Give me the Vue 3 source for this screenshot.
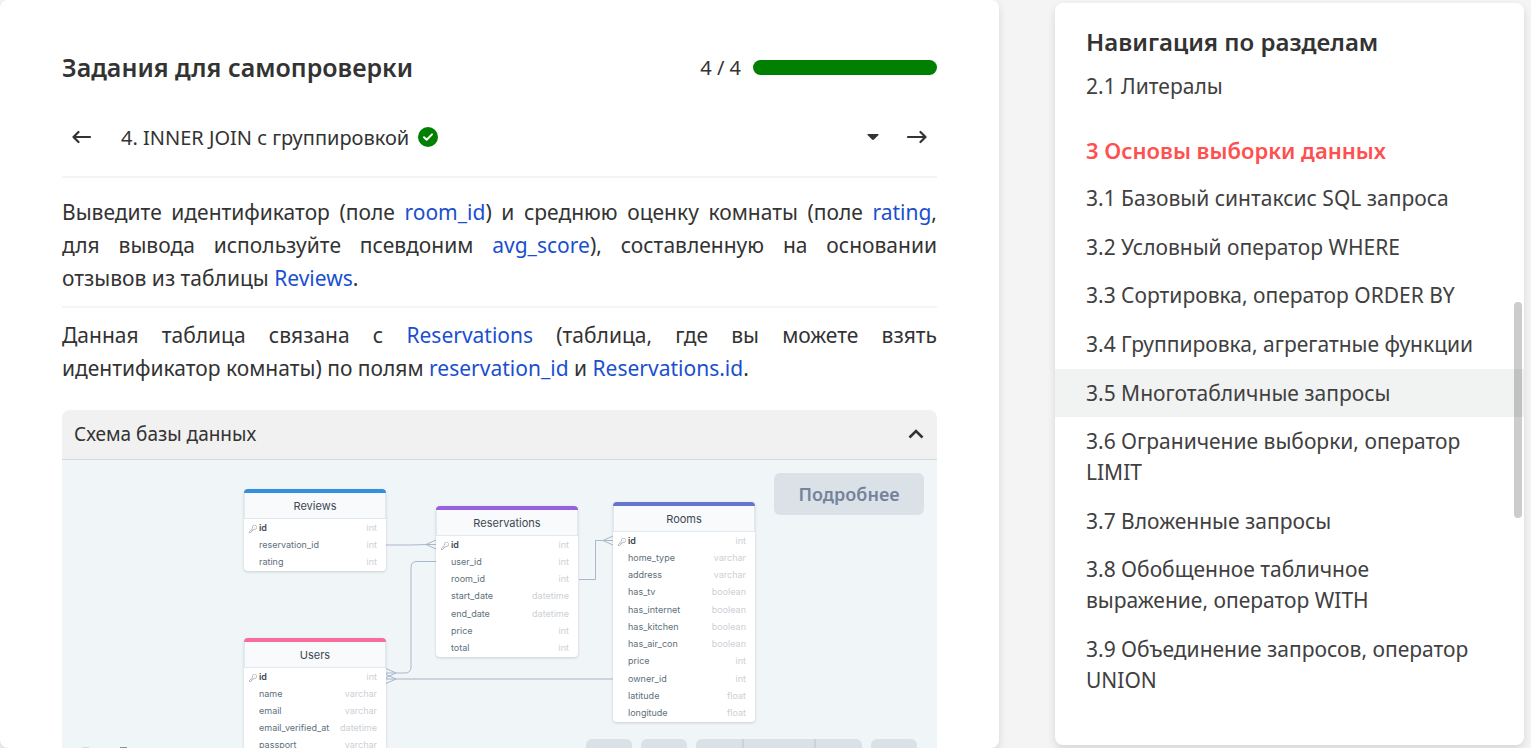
<script setup>
const tables = [
  {
    name: 'Reviews', tone: 'blue', left: 182, top: 29,
    columns: [['id', 'int'], ['reservation_id', 'int'], ['rating', 'int']],
  },
  {
    name: 'Reservations', tone: 'violet', left: 374, top: 46,
    columns: [
      ['id', 'int'], ['user_id', 'int'], ['room_id', 'int'], ['start_date', 'datetime'],
      ['end_date', 'datetime'], ['price', 'int'], ['total', 'int'],
    ],
  },
  {
    name: 'Rooms', tone: 'indigo', left: 551, top: 42,
    columns: [
      ['id', 'int'], ['home_type', 'varchar'], ['address', 'varchar'], ['has_tv', 'boolean'],
      ['has_internet', 'boolean'], ['has_kitchen', 'boolean'], ['has_air_con', 'boolean'],
      ['price', 'int'], ['owner_id', 'int'], ['latitude', 'float'], ['longitude', 'float'],
    ],
  },
  {
    name: 'Users', tone: 'pink', left: 182, top: 178,
    columns: [
      ['id', 'int'], ['name', 'varchar'], ['email', 'varchar'],
      ['email_verified_at', 'datetime'], ['passport', 'varchar'],
    ],
  },
]

const bodyHeight = (t) => Math.round((t.columns.length * 190) / 11)

const lessons = [
  '3.1 Базовый синтаксис SQL запроса',
  '3.2 Условный оператор WHERE',
  '3.3 Сортировка, оператор ORDER BY',
  '3.4 Группировка, агрегатные функции',
  '3.5 Многотабличные запросы',
  '3.6 Ограничение выборки, оператор LIMIT',
  '3.7 Вложенные запросы',
  '3.8 Обобщенное табличное выражение, оператор WITH',
  '3.9 Объединение запросов, оператор UNION',
]
const current = 4
</script>

<template>
  <div class="page">
    <main class="card">
      <header class="head">
        <h2>Задания для самопроверки</h2>
        <div class="score">
          <span id="score-label">4 / 4</span>
          <div class="bar" role="progressbar" aria-labelledby="score-label" aria-valuenow="4" aria-valuemax="4"></div>
        </div>
      </header>

      <div class="task">
        <button class="icon" type="button" aria-label="Назад">
          <svg width="20" height="14" viewBox="0 0 20 14"><path d="M18 7H2M6.500 2 1.500 7l5 5" /></svg>
        </button>
        <button class="pick" type="button">
          <span>4. INNER JOIN с группировкой</span>
          <svg class="done" width="20" height="20" viewBox="0 0 20 20">
            <circle cx="10" cy="10" r="10" fill="#008000" />
            <path d="M6 10.200l2.700 2.500L14 7.400" />
          </svg>
          <svg class="caret" width="12" height="8" viewBox="0 0 12 8"><path d="M.500 1h11v1L7 6.600q-1 .800-2 0L.500 2z" /></svg>
        </button>
        <button class="icon" type="button" aria-label="Вперёд">
          <svg width="20" height="14" viewBox="0 0 20 14"><path d="M1 7h16M13.500 2l5 5-5 5" /></svg>
        </button>
      </div>

      <div class="text">
        <p>
          Выведите идентификатор (поле <em>room_id</em>) и среднюю оценку комнаты (поле <em>rating</em>,
          для вывода используйте псевдоним <em>avg_score</em>), составленную на основании отзывов&nbsp;из
          таблицы <em>Reviews</em>.
        </p>
        <p>
          Данная таблица связана с <em>Reservations</em> (таблица, где вы можете взять идентификатор
          комнаты) по полям <em>reservation_id</em> и <em>Reservations.id</em>.
        </p>
      </div>

      <section class="schema">
        <button class="toggle" type="button" aria-expanded="true">
          <span>Схема базы данных</span>
          <svg width="16" height="12" viewBox="0 0 16 12"><path d="M1.500 8.500 8 2l6.500 6.500" /></svg>
        </button>
        <div class="canvas">
          <svg class="links" width="560" height="288" viewBox="0 0 560 288">
            <path d="M324 85h25l16-.500h9M364 84.500l10-4.500M364 84.500l10 4.500" />
            <path d="M374 101.500H355q-6 0-6 6V207q0 6-6 6H324M334 213l-10-4.500M334 213l-10 4.500" />
            <path d="M517 119.500h16.500v-39H551M541 80.500l10-4.500M541 80.500l10 4.500" />
            <path class="wide" d="M324 219h227" />
            <path d="M334 219l-10-4.500M334 219l-10 4.500" />
            <path d="M20 287.500h7" stroke="#d5dbe0" />
            <path d="M58 287.500h7" stroke="#8b949e" />
          </svg>
          <div
            v-for="t in tables"
            :key="t.name"
            class="node"
            :class="t.tone"
            :style="{ left: t.left + 'px', top: t.top + 'px' }"
          >
            <h3 :id="'t-' + t.name">{{ t.name }}</h3>
            <table :aria-labelledby="'t-' + t.name" :style="{ height: bodyHeight(t) + 'px' }">
              <tbody>
                <tr v-for="(c, i) in t.columns" :key="c[0]">
                  <td class="key">
                    <svg v-if="i === 0" width="8" height="8" viewBox="0 0 8 8">
                      <path d="M3.600 3.200A2.200 2.200 0 1 1 5 4.400L4.200 5H3.400v.900h-.900v.900L1.800 7.500H.500V6.200z" />
                      <path d="M5.300 2.600h.400" />
                    </svg>
                  </td>
                  <td class="col">{{ c[0] }}</td>
                  <td class="type">{{ c[1] }}</td>
                </tr>
              </tbody>
            </table>
          </div>
          <button class="more" type="button">Подробнее</button>
          <div class="tools">
            <button type="button" aria-label="Отменить"></button>
            <button type="button" aria-label="Повторить"></button>
            <div class="group">
              <button type="button" aria-label="Уменьшить"></button>
              <button class="mid" type="button" aria-label="Масштаб"></button>
              <button type="button" aria-label="Увеличить"></button>
            </div>
            <button type="button" aria-label="На весь экран"></button>
          </div>
        </div>
      </section>
    </main>

    <aside class="side">
      <h2>Навигация по разделам</h2>
      <nav>
        <a href="#">2.1 Литералы</a>
        <h3>3 Основы выборки данных</h3>
        <a v-for="(l, i) in lessons" :key="l" href="#" :class="{ current: i === current }">{{ l }}</a>
      </nav>
      <div class="thumb"></div>
    </aside>
  </div>
</template>

<style>
body {
  margin: 0;
  background: #f4f4f4;
}
</style>

<style scoped>
* {
  box-sizing: border-box;
}
.page {
  display: grid;
  grid-template-columns: minmax(0, 999fr) minmax(0, 469fr);
  column-gap: 56px;
  height: 100vh;
  padding-right: 7px;
  overflow: hidden;
  color: #333;
  font: 20px/33px "Noto Sans", "Open Sans", sans-serif;
}
h2,
h3,
p {
  margin: 0;
}
h2 {
  font-size: 24px;
  font-weight: 600;
  line-height: 36px;
}
button {
  margin: 0;
  padding: 0;
  border: 0;
  background: none;
  color: inherit;
  font: inherit;
}
svg {
  flex: none;
  display: block;
}
.card,
.side {
  background: #fff;
  border-radius: 8px;
  box-shadow: 0 4px 8px rgba(0, 0, 0, 0.12);
}
.card {
  display: flex;
  flex-direction: column;
  padding: 49px 62px 0;
}
.head,
.score,
.task,
.pick,
.toggle {
  display: flex;
  align-items: center;
}
.head,
.toggle {
  justify-content: space-between;
}
.head h2 {
  font-size: 25px;
}
.score {
  gap: 12px;
}
.bar {
  width: 184px;
  height: 15px;
  border-radius: 8px;
  background: #008000;
}
.task {
  height: 93px;
  padding-top: 13px;
  border-bottom: 2px solid #f4f4f4;
}
.icon {
  display: flex;
  padding: 12px 10px;
}
.icon path {
  fill: none;
  stroke: #333;
  stroke-width: 2.200;
  stroke-linecap: round;
  stroke-linejoin: round;
}
.pick {
  flex: 1;
  gap: 9px;
  padding: 0 18px 0 19px;
}
.done path {
  fill: none;
  stroke: #fff;
  stroke-width: 2;
  stroke-linecap: round;
  stroke-linejoin: round;
}
.caret {
  margin-left: auto;
  fill: #333;
}
.text {
  font-size: 21px;
  text-align: justify;
}
.text p {
  padding: 18px 0 11px;
}
.text p + p {
  padding-top: 11px;
  border-top: 2px solid #f4f4f4;
}
.text em {
  color: #1a4fd0;
  font-style: normal;
}
.schema {
  display: flex;
  flex: 1;
  flex-direction: column;
  margin-top: 14px;
  overflow: hidden;
  border-radius: 8px 8px 0 0;
}
.toggle {
  height: 50px;
  padding: 0 13px 0 12px;
  border-bottom: 1px solid #d6d8e0;
  background: #f1f1f1;
  font-size: 19px;
}
.toggle path {
  fill: none;
  stroke: #333;
  stroke-width: 2.600;
}
.canvas {
  position: relative;
  flex: 1;
  background: #f0f5f8;
  font-family: Inter, "Noto Sans", sans-serif;
}
.links {
  position: absolute;
  top: 0;
  left: 0;
  fill: none;
  stroke: #a9b8cb;
}
.links .wide {
  stroke: #cbd5e0;
  stroke-width: 2;
}
.node {
  position: absolute;
  width: 142px;
  overflow: hidden;
  border-top: 4px solid;
  border-radius: 4px;
  background: #fff;
  box-shadow: 0 1px 3px rgba(0, 0, 0, 0.16);
}
.blue { border-top-color: #3490dc; }
.violet { border-top-color: #9561e2; }
.indigo { border-top-color: #6574cd; }
.pink { border-top-color: #f66d9b; }
.node h3 {
  height: 26px;
  border: 1px solid #e2e8f0;
  border-top: 0;
  background: #f8fafc;
  color: #3d4852;
  font-size: 11px;
  font-weight: 400;
  line-height: 26px;
  text-align: center;
}
.node table {
  width: 100%;
  border-collapse: collapse;
  color: #606f7b;
  font-size: 9px;
  line-height: 12px;
}
.node td {
  padding: 0;
}
.key {
  width: 15px;
}
.key svg {
  margin: 2px 0 0 5px;
  fill: none;
  stroke: #9aa5b1;
  stroke-width: 0.800;
}
tr:first-child .col {
  color: #3d4852;
  font-weight: 600;
}
.node .type {
  padding-right: 9px;
  color: #ccd0d5;
  text-align: right;
}
.more {
  position: absolute;
  top: 13px;
  right: 13px;
  width: 150px;
  height: 42px;
  border-radius: 6px;
  background: #dae2e8;
  color: #76829b;
  font: 600 18px/42px "Noto Sans", sans-serif;
}
.tools {
  position: absolute;
  top: 279px;
  right: 20px;
  display: flex;
  gap: 9px;
}
.tools button {
  width: 46px;
  height: 42px;
  border-radius: 6px;
  background: #dae2e8;
}
.tools .group {
  display: flex;
  overflow: hidden;
  border-radius: 6px;
}
.tools .group button {
  border-radius: 0;
}
.tools .group .mid {
  width: 74px;
  border: solid #c8d3de;
  border-width: 0 2px;
}
.side {
  position: relative;
  display: flex;
  flex-direction: column;
  margin: 3px 0;
  padding: 21px 0 41px;
}
.side h2 {
  padding: 0 31px 2px;
}
nav {
  display: flex;
  flex: 1;
  flex-direction: column;
  justify-content: space-between;
  color: #404040;
  font-size: 21px;
  line-height: 31px;
}
nav a,
nav h3 {
  padding: 9px 46px 8px 31px;
}
nav a {
  color: inherit;
  text-decoration: none;
}
nav a.current {
  background: #f1f3f3;
}
nav h3 {
  padding-top: 24px;
  color: #ff5050;
  font-size: 22px;
  font-weight: 600;
}
.thumb {
  position: absolute;
  top: 299px;
  right: 2px;
  width: 8px;
  height: 216px;
  border-radius: 4px;
  background: rgba(0, 0, 0, 0.2);
}
</style>
